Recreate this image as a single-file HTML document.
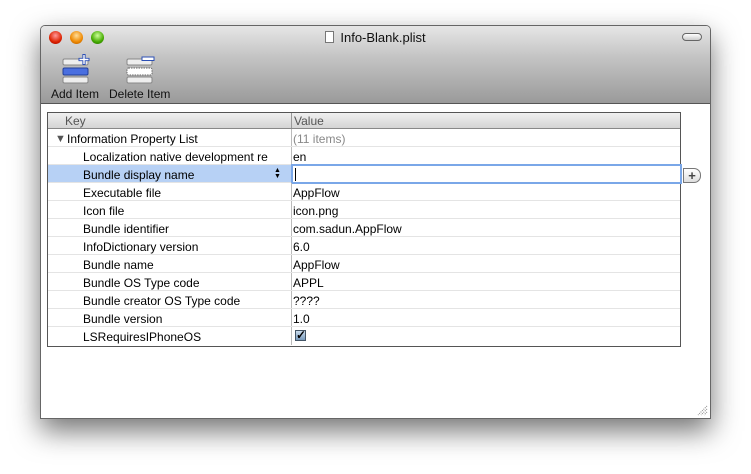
<!DOCTYPE html><html><head><style>
*{margin:0;padding:0;box-sizing:border-box}
body{width:751px;height:474px;background:#fff;position:relative;overflow:hidden;font-family:"Liberation Sans",sans-serif;font-size:12px;color:#000}
.win{position:absolute;left:40px;top:25px;width:671px;height:394px;background:#fff;border:1px solid #666;border-radius:5px 5px 0 0;box-shadow:0 12px 28px rgba(0,0,0,.55);overflow:hidden}
.tb{position:absolute;left:0;top:0;right:0;height:78px;background:linear-gradient(#e6e6e6,#c4c4c4 40%,#9a9a9a);border-bottom:1px solid #555}
.light{position:absolute;top:5px;width:13px;height:13px;border-radius:50%}
.title{position:absolute;left:0;right:0;top:4px;text-align:center;font-size:13px;color:#111}
.lbl{position:absolute;top:61px;font-size:12px;color:#111}
.tbl{position:absolute;left:6px;top:86px;width:634px;height:235px;border:1px solid #555}
.hd{height:16px;background:linear-gradient(#f0f0f0,#d4d4d4);border-bottom:1px solid #888;position:relative;color:#555}
.row{height:18px;border-bottom:1px solid #e4e4e4;position:relative;line-height:18px}
.k{position:absolute;left:35px;top:1px}
.v{position:absolute;left:245px;top:1px}
.div{position:absolute;left:243px;top:0;bottom:0;width:1px;background:#bbb}
</style></head><body>
<div class="win">
<div class="tb">
<div class="light" style="left:8px;background:radial-gradient(circle at 50% 35%,#f99,#d20 60%,#900)"></div>
<div class="light" style="left:29px;background:radial-gradient(circle at 50% 35%,#fd9,#e80 60%,#a50)"></div>
<div class="light" style="left:50px;background:radial-gradient(circle at 50% 35%,#cf9,#4a0 60%,#260)"></div>
<div class="title"><span style="display:inline-block;width:9px;height:12px;border:1px solid #777;background:#fff;vertical-align:-1px;margin-right:6px"></span>Info-Blank.plist</div>
<div style="position:absolute;right:8px;top:7px;width:20px;height:8px;border:1px solid #666;border-radius:4px;background:linear-gradient(#fff,#ccc)"></div>
<svg style="position:absolute;left:20px;top:28px" width="32" height="30"><rect x="2" y="5" width="25" height="6" rx="1.5" fill="#eee" stroke="#888"/><rect x="2" y="14" width="25" height="7" rx="1.5" fill="#4a6fe0" stroke="#223f9a"/><rect x="2" y="23" width="25" height="6" rx="1.5" fill="#eee" stroke="#888"/><path d="M23 0v11M17.5 5.5h11" stroke="#2c4fb5" stroke-width="3.2"/><path d="M23 1v9M18.5 5.5h9" stroke="#fff" stroke-width="1.4"/></svg>
<svg style="position:absolute;left:84px;top:28px" width="32" height="30"><rect x="2" y="5" width="25" height="6" rx="1.5" fill="#eee" stroke="#888"/><rect x="2" y="14" width="25" height="7" rx="1.5" fill="#fff" stroke="#666" stroke-dasharray="1.5 1"/><rect x="2" y="23" width="25" height="6" rx="1.5" fill="#eee" stroke="#888"/><rect x="17" y="3" width="12" height="3.5" fill="#fff" stroke="#2c4fb5"/></svg>
<div class="lbl" style="left:10px">Add Item</div>
<div class="lbl" style="left:68px">Delete Item</div>
</div>
<div class="tbl">
<div class="hd"><span style="position:absolute;left:17px;top:1px">Key</span><span style="position:absolute;left:246px;top:1px">Value</span><div class="div" style="background:#999"></div></div>
<div class="row"><span style="position:absolute;left:7px;top:1px;font-size:11px;color:#555">▼</span><span style="position:absolute;left:19px;top:1px">Information Property List</span><span class="v" style="color:#888">(11 items)</span><div class="div"></div></div>
<div class="row"><span class="k">Localization native development re</span><span class="v">en</span><div class="div"></div></div>
<div class="row" style="background:#b7d1f5"><span class="k">Bundle display name</span><span style="position:absolute;left:226px;font-size:7px;line-height:6px;top:3px">▲<br>▼</span><div style="position:absolute;left:243px;top:-1px;width:391px;height:20px;border:2px solid #7aa7e8;background:#fff"><div style="position:absolute;left:2px;top:2px;width:1px;height:13px;background:#000"></div></div></div>
<div class="row"><span class="k">Executable file</span><span class="v">AppFlow</span><div class="div"></div></div>
<div class="row"><span class="k">Icon file</span><span class="v">icon.png</span><div class="div"></div></div>
<div class="row"><span class="k">Bundle identifier</span><span class="v">com.sadun.AppFlow</span><div class="div"></div></div>
<div class="row"><span class="k">InfoDictionary version</span><span class="v">6.0</span><div class="div"></div></div>
<div class="row"><span class="k">Bundle name</span><span class="v">AppFlow</span><div class="div"></div></div>
<div class="row"><span class="k">Bundle OS Type code</span><span class="v">APPL</span><div class="div"></div></div>
<div class="row"><span class="k">Bundle creator OS Type code</span><span class="v">????</span><div class="div"></div></div>
<div class="row"><span class="k">Bundle version</span><span class="v">1.0</span><div class="div"></div></div>
<div class="row" style="border-bottom:none"><span class="k">LSRequiresIPhoneOS</span><span style="position:absolute;left:247px;top:3px;width:11px;height:11px;border:1px solid #456;background:linear-gradient(#cde,#79b);font-size:12px;line-height:9px;font-weight:bold">✓</span><div class="div"></div></div>
</div>
<div style="position:absolute;left:642px;top:142px;width:18px;height:15px;border:1px solid #777;border-radius:0 7px 7px 0;background:linear-gradient(#fff,#ddd);text-align:center;font-size:13px;line-height:13px;font-weight:bold;color:#444">+</div>
<svg style="position:absolute;right:2px;bottom:2px" width="11" height="11"><path d="M10 1L1 10M10 4L4 10M10 7L7 10" stroke="#888" stroke-dasharray="1 1"/></svg>
</div>
</body></html>
